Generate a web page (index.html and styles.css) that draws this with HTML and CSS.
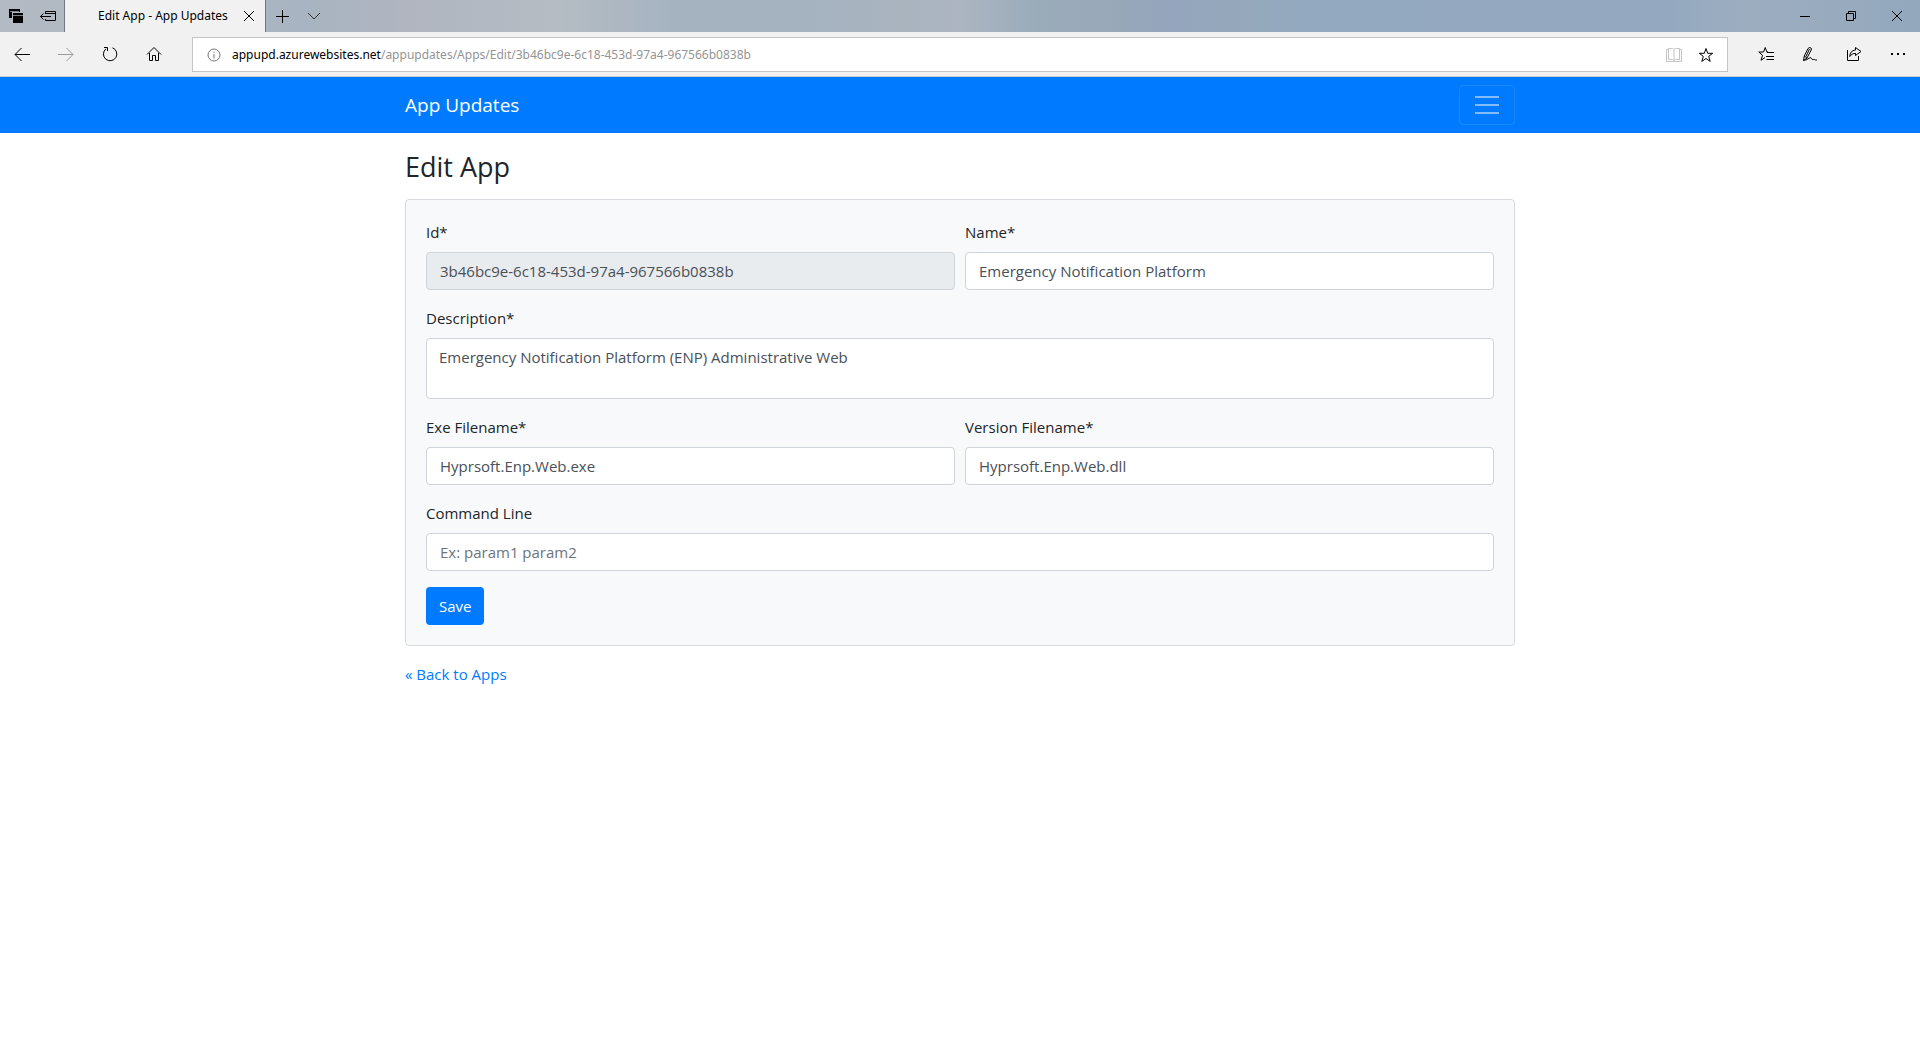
FILE: index.html
```html
<!DOCTYPE html>
<html lang="en">
<head>
<meta charset="utf-8">
<title>Edit App - App Updates</title>
<link rel="stylesheet" href="styles.css">
</head>
<body>
<header class="browser">
  <div class="tabbar">
    <button class="tab-tool" aria-label="Tabs you've set aside"><svg width="16" height="16" viewBox="0 0 16 16"><path d="M1 1h11v3H4v6H1z" fill="#000" stroke="none"/><path d="M5 5h10v10H5z" fill="#000" stroke="none"/><path d="M2 3.500h9M5 7.500h10" stroke="#7d838a"/></svg></button>
    <button class="tab-tool" aria-label="Set these tabs aside"><svg width="16" height="16" viewBox="0 0 16 16"><path d="M5.500 6V3.500h10v9h-10V11M5.500 5.500h10M.5 8.500H11M3.500 5.500L.5 8.500l3 3"/></svg></button>
    <div class="tab">
      <span class="tab-title">Edit App - App Updates</span>
      <button class="tab-close" aria-label="Close tab"><svg width="12" height="12" viewBox="0 0 12 12"><path d="M1 1l10 10M11 1L1 11"/></svg></button>
    </div>
    <button class="tab-tool" aria-label="New tab"><svg width="14" height="14" viewBox="0 0 14 14"><path d="M7.500 1v13M1 7.500h13"/></svg></button>
    <button class="tab-tool" aria-label="Show tab previews"><svg width="14" height="14" viewBox="0 0 14 14"><path d="M1 4l6 6 6-6" stroke="#333"/></svg></button>
    <div class="window-controls">
      <button class="window-button" aria-label="Minimize"><svg width="10" height="10" viewBox="0 0 10 10"><path d="M0 5.500h10"/></svg></button>
      <button class="window-button" aria-label="Restore"><svg width="10" height="10" viewBox="0 0 10 10"><path d="M.5 2.500h7v7h-7zM2.500 2.500v-2h7v7h-2"/></svg></button>
      <button class="window-button" aria-label="Close"><svg width="10" height="10" viewBox="0 0 10 10"><path d="M0 0l10 10M10 0L0 10"/></svg></button>
    </div>
  </div>
  <div class="toolbar">
    <nav class="toolbar-group" aria-label="Browser navigation">
      <button class="tool" aria-label="Back"><svg width="16" height="16" viewBox="0 0 16 16"><path d="M1 8.500h15M7.500 2L1 8.500 7.500 15"/></svg></button>
      <button class="tool tool-muted" aria-label="Forward"><svg width="16" height="16" viewBox="0 0 16 16"><path d="M0 8.500h15M8.500 2L15 8.500 8.500 15"/></svg></button>
      <button class="tool" aria-label="Refresh"><svg width="16" height="16" viewBox="0 0 16 16"><path d="M10.500 1.800A6.700 6.700 0 1 1 4 2.800M2 1.500h3.500V5"/></svg></button>
      <button class="tool" aria-label="Home"><svg width="16" height="16" viewBox="0 0 16 16"><path d="M1 8.500L8 1.500l7 7M3.500 7v7.500h3v-5h3v5h3V7"/></svg></button>
    </nav>
    <div class="address">
      <svg class="info" width="14" height="14" viewBox="0 0 14 14"><circle cx="7" cy="7" r="6"/><path d="M7 6v4.500M7 3.500v1.200"/></svg>
      <span class="url"><span class="url-host">appupd.azurewebsites.net</span>/appupdates/Apps/Edit/3b46bc9e-6c18-453d-97a4-967566b0838b</span>
      <button class="address-tool tool-faint" aria-label="Reading view"><svg width="16" height="16" viewBox="0 0 16 16"><path d="M2.500 2.500h-2v12h15v-12h-2M2.500 1.500h4L8 2.500l1.500-1h4v11h-4L8 13.500l-1.500-1h-4zM8 2.500v11"/></svg></button>
      <button class="address-tool" aria-label="Add to favorites"><svg width="16" height="16" viewBox="0 0 16 16"><path d="M8 1.500l1.700 4.800h5l-4 3.100 1.500 5L8 11.500l-4.200 2.900 1.500-5-4-3.100h5z"/></svg></button>
    </div>
    <div class="toolbar-group">
      <button class="tool" aria-label="Favorites hub"><svg width="16" height="16" viewBox="0 0 16 16"><path d="M10 6L8.900 6 7.200 1.500 5.500 6H.8l3.700 3.300-1.500 5L7 11.500M9 6.500h7M8 10.500h8M8.500 13.500H16"/></svg></button>
      <button class="tool" aria-label="Add notes"><svg width="16" height="16" viewBox="0 0 16 16"><path d="M1.500 14.500l.8-4.500L6 2.500Q7.500.8 9 2q.8.8.2 2L5 12zM2.300 10L5 12M7.500 3L4 10.500M1.500 14.500Q5 14 8 11.700c1.500-.8 1.500 2.300 3 1.800 1.200-.6 2 .9 4 .5"/></svg></button>
      <button class="tool" aria-label="Share"><svg width="16" height="16" viewBox="0 0 16 16"><path d="M1.500 4v10.500h11V10M9.500 1.500l5.500 4-5.500 4V7.300Q6 7 3.800 10.500 4 4.500 9.500 4z"/></svg></button>
      <button class="tool" aria-label="Settings and more"><svg width="16" height="16" viewBox="0 0 16 16"><path d="M1 8h2M7 8h2M13 8h2" stroke-width="2"/></svg></button>
    </div>
  </div>
</header>
<nav class="navbar" aria-label="Main">
  <div class="container navbar-inner">
    <a class="brand" href="#">App Updates</a>
    <button class="toggler" aria-label="Toggle navigation"><svg width="30" height="30" viewBox="0 0 30 30"><path d="M3 7h24M3 15h24M3 23h24"/></svg></button>
  </div>
</nav>
<main class="container content">
  <h1 class="title">Edit App</h1>
  <form class="panel">
    <div class="field">
      <label for="id">Id*</label>
      <input class="control" id="id" type="text" value="3b46bc9e-6c18-453d-97a4-967566b0838b" readonly>
    </div>
    <div class="field">
      <label for="name">Name*</label>
      <input class="control" id="name" type="text" value="Emergency Notification Platform">
    </div>
    <div class="field field-wide">
      <label for="description">Description*</label>
      <textarea class="control control-area" id="description" rows="2">Emergency Notification Platform (ENP) Administrative Web</textarea>
    </div>
    <div class="field">
      <label for="exe">Exe Filename*</label>
      <input class="control" id="exe" type="text" value="Hyprsoft.Enp.Web.exe">
    </div>
    <div class="field">
      <label for="version">Version Filename*</label>
      <input class="control" id="version" type="text" value="Hyprsoft.Enp.Web.dll">
    </div>
    <div class="field field-wide">
      <label for="command">Command Line</label>
      <input class="control" id="command" type="text" placeholder="Ex: param1 param2">
    </div>
    <button class="save" type="submit">Save</button>
  </form>
  <a class="back" href="#">« Back to Apps</a>
</main>
</body>
</html>
```
FILE: styles.css
```css
* { box-sizing: border-box; }

body {
  margin: 0;
  background: #fff;
  color: #212529;
  font: 15px/24px "Open Sans", "Noto Sans", sans-serif;
}

button {
  padding: 0;
  border: 0;
  background: none;
  font: inherit;
}

svg {
  display: block;
  fill: none;
  stroke: currentColor;
}

/* Browser window */
.browser {
  color: #000;
  font-family: "Noto Sans", "Open Sans", sans-serif;
  font-size: 12px;
  line-height: 16px;
}

.tabbar {
  display: flex;
  height: 32px;
  background: linear-gradient(90deg, #b3bac3 0%, #a8b4c1 16%, #b0b5c0 21%, #b5bcc3 29%, #a5b3c1 35%, #a5b3c1 42%, #a9b4bf 47%, #acb5c1 50%, #9aabba 54%, #98a8b8 58%, #94a5bd 61%, #95a9bb 65%, #93a9bf 68%, #94a9bf 87%, #9dadc0 91%, #93a8bd 100%);
}

.tab-tool, .window-button, .tool, .address-tool {
  display: flex;
  align-items: center;
  justify-content: center;
  color: #000;
}

.tab-tool { width: 32px; }

.tab {
  display: flex;
  align-items: center;
  justify-content: space-between;
  width: 202px;
  padding: 0 10px 0 33px;
  border: solid #73777d;
  border-width: 0 1px;
  background: #f1f1f1;
}

.tab-title { white-space: nowrap; }

.window-controls {
  display: flex;
  margin-left: auto;
}

.window-button { width: 46px; }

.toolbar {
  display: flex;
  gap: 16px;
  height: 45px;
  padding-bottom: 1px;
  border-bottom: 1px solid #ccc;
  background: #f1f1f1;
}

.toolbar-group { display: flex; }

.tool { width: 44px; }
.tool-muted { color: #999; }

.address {
  display: flex;
  flex: 1;
  align-items: center;
  margin: 5px 0 3px;
  padding: 0 5px 0 14px;
  border: 1px solid #c5c5c5;
  background: #fff;
}

.info { color: #777; }

.url {
  flex: 1;
  margin-left: 11px;
  color: #949494;
}

.url-host { color: #000; }
.address-tool { width: 32px; height: 32px; }
.tool-faint { color: #c4c4c4; }

/* Page */
.container {
  max-width: 1140px;
  margin: 0 auto;
  padding: 0 15px;
}

.navbar {
  padding: 8px 0;
  background: #007bff;
}

.navbar-inner {
  display: flex;
  align-items: center;
  justify-content: space-between;
}

.brand {
  color: #fff;
  font-size: 19px;
  line-height: 30px;
  text-decoration: none;
}

.toggler {
  padding: 4px 12px;
  border: 1px solid rgba(255, 255, 255, .1);
  border-radius: 4px;
  color: rgba(255, 255, 255, .5);
  stroke-width: 2;
}

.content { padding-top: 16px; }

.title {
  margin: 0 0 14px;
  font-size: 27px;
  font-weight: 400;
  line-height: 36px;
}

.panel {
  display: grid;
  grid-template-columns: 1fr 1fr;
  gap: 16px 10px;
  margin-bottom: 16px;
  padding: 20px;
  border: 1px solid #d6dade;
  border-radius: 4px;
  background: #f8f9fa;
}

.field {
  display: flex;
  flex-direction: column;
  gap: 8px;
}

.field-wide { grid-column: 1 / -1; }

.control {
  width: 100%;
  height: 38px;
  padding: 6px 13px;
  border: 1px solid #ced4da;
  border-radius: 4px;
  background: #fff;
  color: #495057;
  font: inherit;
}

.control:read-only { background: #e9ecef; }
.control::placeholder { color: #6c757d; }

.control-area {
  height: 61px;
  padding: 6px 12px;
  resize: none;
  overflow: hidden;
}

.save {
  justify-self: start;
  height: 38px;
  padding: 0 13px;
  border-radius: 4px;
  background: #007bff;
  color: #fff;
}

.back {
  color: #007bff;
  text-decoration: none;
}
```
